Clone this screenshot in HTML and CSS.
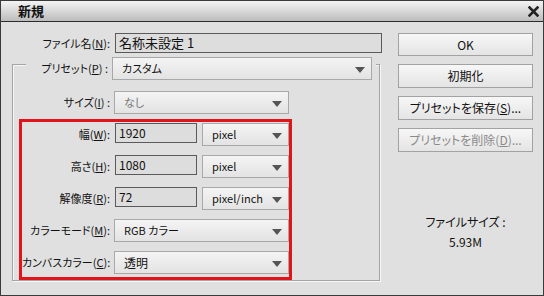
FILE: index.html
```html
<!DOCTYPE html>
<html lang="ja">
<head>
<meta charset="UTF-8">
<title>新規</title>
<link rel="stylesheet" href="styles.css">
</head>
<body>
<div class="dialog">
	<div class="titlebar">
		<h1>新規</h1>
		<span class="close">
			<svg width="11" height="11" viewBox="0 0 11 11"><path d="M1.5 1.5 L9.5 9.5 M9.5 1.5 L1.5 9.5" stroke="#222" stroke-width="2.6" stroke-linecap="square"/></svg>
		</span>
	</div>
	<div class="content">
		<div class="main">
			<div class="row file-row">
				<label>ファイル名(<u>N</u>):</label>
				<div class="field name">名称未設定 1</div>
			</div>
			<div class="group">
				<div class="row preset-row">
					<label>プリセット(<u>P</u>) :</label>
					<div class="select preset">カスタム</div>
				</div>
				<div class="row size-row">
					<label>サイズ(<u>I</u>) :</label>
					<div class="select long disabled">なし</div>
				</div>
				<div class="redbox">
					<div class="row">
						<label>幅(<u>W</u>):</label>
						<div class="field num">1920</div>
						<div class="select unit">pixel</div>
					</div>
					<div class="row">
						<label>高さ(<u>H</u>):</label>
						<div class="field num">1080</div>
						<div class="select unit">pixel</div>
					</div>
					<div class="row">
						<label>解像度(<u>R</u>):</label>
						<div class="field num">72</div>
						<div class="select unit">pixel/inch</div>
					</div>
					<div class="row">
						<label>カラーモード(<u>M</u>):</label>
						<div class="select long">RGB カラー</div>
					</div>
					<div class="row">
						<label>カンバスカラー(<u>C</u>):</label>
						<div class="select long big">透明</div>
					</div>
				</div>
			</div>
		</div>
		<div class="side">
			<div class="btn first">OK</div>
			<div class="btn">初期化</div>
			<div class="btn">プリセットを保存(<u>S</u>)...</div>
			<div class="btn off">プリセットを削除(<u>D</u>)...</div>
			<div class="filesize">
				<p>ファイルサイズ :</p>
				<p>5.93M</p>
			</div>
		</div>
	</div>
</div>
</body>
</html>
```

FILE: styles.css
```css
*{
	box-sizing: border-box;
}
html,body,h1,p{
	margin: 0;
	padding: 0;
}
body{
	font-family: "Noto Sans CJK JP", "Liberation Sans", sans-serif;
	font-size: 12px;
	color: #111;
	font-feature-settings: "palt";
}
.dialog{
	width: 544px;
	height: 296px;
	border: 1px solid #3a3a3a;
	background: #e0e0e0;
}
.titlebar{
	height: 21px;
	border-bottom: 1px solid #2c2c2c;
	background: linear-gradient(#f4f4f4, #bcbcbc);
	display: flex;
	align-items: center;
	justify-content: space-between;
	padding: 0 4px 0 17px;
}
.titlebar h1{
	font-size: 13px;
	font-weight: bold;
	line-height: 20px;
}
.close{
	display: flex;
	width: 11px;
	height: 11px;
}
.content{
	display: flex;
	padding-top: 11px;
}
.main{
	width: 391px;
}
.row{
	display: flex;
	align-items: flex-start;
}
.row label{
	flex-shrink: 0;
	text-align: right;
	font-size: 11px;
	line-height: 23px;
	white-space: nowrap;
}
.file-row label{
	width: 109px;
	line-height: 20px;
	margin-right: 5px;
}
.field{
	flex-shrink: 0;
	height: 20px;
	line-height: 18px;
	padding-left: 3px;
	border: 1px solid #5a5a5a;
	background: #dddddd;
	white-space: nowrap;
}
.field.name{
	width: 267px;
	font-size: 13px;
}
.group{
	margin: 11px 0 0 11px;
	width: 368px;
	border: 1px solid #a4a4a4;
	box-shadow: inset 1px 1px 0 #f6f6f6, 1px 1px 0 #f6f6f6;
}
.preset-row{
	margin: -8px 0 0 13px;
	width: 350px;
	padding-right: 4px;
	background: #e0e0e0;
}
.preset-row label{
	width: 84px;
	padding-right: 2px;
}
.select{
	flex-shrink: 0;
	position: relative;
	height: 23px;
	line-height: 21px;
	padding-left: 9px;
	font-size: 11px;
	border: 1px solid #a8a8a8;
	background: linear-gradient(#f4f4f4, #e3e3e3);
	white-space: nowrap;
}
.select::after{
	content: "";
	position: absolute;
	right: 6px;
	top: 9px;
	border-left: 5px solid transparent;
	border-right: 5px solid transparent;
	border-top: 6px solid #555;
}
.select.preset{
	margin-left: 2px;
	width: 260px;
}
.select.disabled{
	color: #777;
}
.select.big{
	font-size: 12px;
}
.size-row{
	margin-top: 11px;
	padding-left: 9px;
}
.size-row label,
.redbox label{
	width: 88px;
	margin-right: 4px;
}
.select.long{
	width: 175px;
}
.redbox{
	margin: 5px 0 0 6px;
	width: 273px;
	border: 3px solid #e2141a;
	padding: 1px 0 3px;
	display: flex;
	flex-direction: column;
	gap: 9px;
}
.field.num{
	width: 82px;
	margin-left: 1px;
	font-size: 12px;
}
.select.unit{
	width: 87px;
	margin-left: 5px;
}
.side{
	margin-left: 6px;
	width: 135px;
}
.btn{
	height: 24px;
	line-height: 22px;
	margin-top: 8px;
	text-align: center;
	border: 1px solid #a2a2a2;
	background: linear-gradient(#f7f7f7, #e4e4e4);
}
.btn.first{
	margin-top: 0;
	height: 23px;
	line-height: 21px;
}
.btn.off{
	color: #8a8a8a;
}
.filesize{
	margin-top: 60px;
	text-align: center;
	line-height: 20px;
}
```
